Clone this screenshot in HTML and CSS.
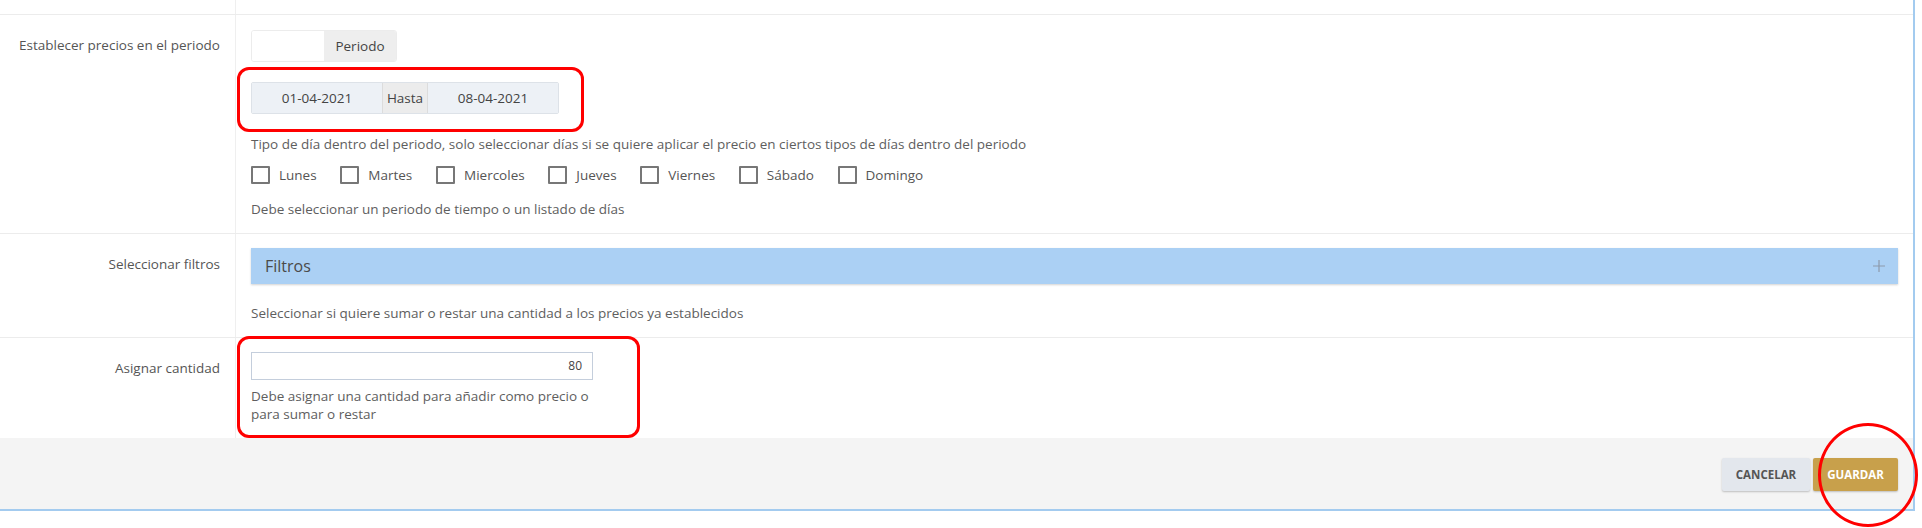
FILE: index.html
```html
<!DOCTYPE html>
<html lang="es">
<head>
<meta charset="utf-8">
<title>Establecer precios</title>
<link rel="stylesheet" href="styles.css">
</head>
<body>
<div class="panel">
  <div class="row row-top">
    <div class="label"></div>
    <div class="field"></div>
  </div>

  <div class="row">
    <div class="label">Establecer precios en el periodo</div>
    <div class="field">
      <div class="period-group">
        <span class="period-input"></span>
        <span class="period-addon">Periodo</span>
      </div>
      <div class="range-wrap">
        <div class="range-group">
          <span class="range-date">01-04-2021</span>
          <span class="range-addon">Hasta</span>
          <span class="range-date">08-04-2021</span>
        </div>
        <span class="highlight hl-range"></span>
      </div>
      <p class="help help-days">Tipo de día dentro del periodo, solo seleccionar días si se quiere aplicar el precio en ciertos tipos de días dentro del periodo</p>
      <div class="days">
        <label class="day"><span class="box"></span>Lunes</label>
        <label class="day"><span class="box"></span>Martes</label>
        <label class="day"><span class="box"></span>Miercoles</label>
        <label class="day"><span class="box"></span>Jueves</label>
        <label class="day"><span class="box"></span>Viernes</label>
        <label class="day"><span class="box"></span>Sábado</label>
        <label class="day"><span class="box"></span>Domingo</label>
      </div>
      <p class="help help-last">Debe seleccionar un periodo de tiempo o un listado de días</p>
    </div>
  </div>

  <div class="row">
    <div class="label">Seleccionar filtros</div>
    <div class="field">
      <div class="filters-bar">
        <span class="filters-title">Filtros</span>
        <svg class="plus" width="14" height="14" viewBox="0 0 14 14"><path d="M7 1v12M1 7h12" stroke="#8d9aab" stroke-width="1.2" fill="none"/></svg>
      </div>
      <p class="help help-filters">Seleccionar si quiere sumar o restar una cantidad a los precios ya establecidos</p>
    </div>
  </div>

  <div class="row row-last">
    <div class="label">Asignar cantidad</div>
    <div class="field">
      <div class="amount-wrap">
        <div class="amount-input">80</div>
        <p class="help help-amount">Debe asignar una cantidad para añadir como precio o para sumar o restar</p>
        <span class="highlight hl-amount"></span>
      </div>
    </div>
  </div>

  <div class="footer">
    <button class="btn btn-cancel">CANCELAR</button>
    <button class="btn btn-save">GUARDAR</button>
  </div>
</div>
<span class="circle"></span>
</body>
</html>
```

FILE: styles.css
```css
html, body {
  margin: 0;
  padding: 0;
  background: #ffffff;
  overflow: hidden;
}
body {
  position: relative;
  width: 1922px;
  height: 528px;
  font-family: "Open Sans", "Noto Sans", sans-serif;
  font-size: 13.5px;
  color: #595959;
}
.panel {
  width: 1915px;
  box-sizing: border-box;
  border-right: 2px solid #a3cbef;
  border-bottom: 2px solid #a3cbef;
}
.row {
  display: grid;
  grid-template-columns: 236px 1fr;
  border-bottom: 1px solid #ececec;
}
.row-top {
  height: 14px;
}
.row-last {
  border-bottom: none;
}
.label {
  box-sizing: border-box;
  border-right: 1px solid #efefef;
  text-align: right;
  padding: 14px 15px 0 0;
  line-height: 32px;
  color: #555;
}
.row-top .label { padding: 0; }
.field {
  padding: 15px 15px 15px 15px;
  min-width: 0;
}
.row-top .field { padding: 0; }

.period-group {
  display: flex;
  width: 146px;
  height: 32px;
  border: 1px solid #ececec;
  border-radius: 3px;
  box-sizing: border-box;
  overflow: hidden;
}
.period-input {
  width: 72px;
  background: #fff;
}
.period-addon {
  flex: 1;
  background: #eeeeee;
  color: #444;
  display: flex;
  align-items: center;
  justify-content: center;
}

.range-wrap {
  position: relative;
  width: 308px;
  margin-top: 20px;
}
.range-group {
  display: flex;
  height: 32px;
  box-sizing: border-box;
  border: 1px solid #dde2e8;
  border-radius: 2px;
  overflow: hidden;
}
.range-date {
  flex: 0 0 130px;
  background: #edf1f6;
  color: #444;
  display: flex;
  align-items: center;
  justify-content: center;
}
.range-addon {
  flex: 1;
  background: #ececec;
  border-left: 1px solid #dcdcdc;
  border-right: 1px solid #dcdcdc;
  color: #444;
  display: flex;
  align-items: center;
  justify-content: center;
}
.highlight {
  position: absolute;
  border: 3px solid #ff0000;
  border-radius: 12px;
  pointer-events: none;
}
.hl-range {
  left: -14px;
  top: -15px;
  right: -25px;
  bottom: -18px;
}

.help {
  margin: 0;
  line-height: 18px;
  color: #5e5e5e;
}
.help-days {
  margin-top: 21px;
}
.days {
  display: flex;
  gap: 23.7px;
  margin-top: 13px;
  height: 18px;
  align-items: center;
}
.day {
  display: flex;
  align-items: center;
  gap: 9px;
  color: #555;
}
.box {
  width: 19px;
  height: 18px;
  box-sizing: border-box;
  border: 2px solid #777;
  border-radius: 1px;
  background: #fff;
}
.help-last {
  margin-top: 16px;
}

.filters-bar {
  height: 36px;
  background: #abd0f4;
  box-shadow: 0 1px 2px rgba(0, 0, 0, 0.18);
  display: flex;
  align-items: center;
  justify-content: space-between;
  padding: 0 12px 0 14px;
  margin-top: -1px;
}
.filters-title {
  font-size: 16px;
  color: #4a4a4a;
}
.plus {
  display: block;
}
.help-filters {
  margin-top: 20px;
}

.amount-wrap {
  position: relative;
  width: 342px;
}
.amount-input {
  height: 28px;
  box-sizing: border-box;
  border: 1px solid #c4cedc;
  text-align: right;
  padding-right: 10px;
  line-height: 26px;
  font-size: 12px;
  color: #444;
  margin-top: -1px;
}
.help-amount {
  margin-top: 7px;
}
.hl-amount {
  left: -14px;
  top: -16px;
  right: -47px;
  bottom: -15px;
}

.footer {
  height: 71px;
  background: #f4f4f4;
  display: flex;
  justify-content: flex-end;
  align-items: flex-start;
  gap: 3px;
  padding: 20px 15px 0 0;
  box-sizing: border-box;
}
.btn {
  height: 33px;
  border: none;
  border-radius: 2px;
  font-family: "Open Sans", "Noto Sans", sans-serif;
  font-size: 11.5px;
  font-weight: 700;
  padding: 0;
  box-shadow: 0 1px 2px rgba(0, 0, 0, 0.22);
}
.btn-cancel {
  width: 88px;
  background: #e3e7ed;
  color: #555;
}
.btn-save {
  width: 85px;
  background: #c8a04b;
  color: #fff;
}
.circle {
  position: absolute;
  left: 1818px;
  top: 423px;
  width: 100px;
  height: 104px;
  box-sizing: border-box;
  border: 3.5px solid #ff0000;
  border-radius: 50%;
  pointer-events: none;
}
```
